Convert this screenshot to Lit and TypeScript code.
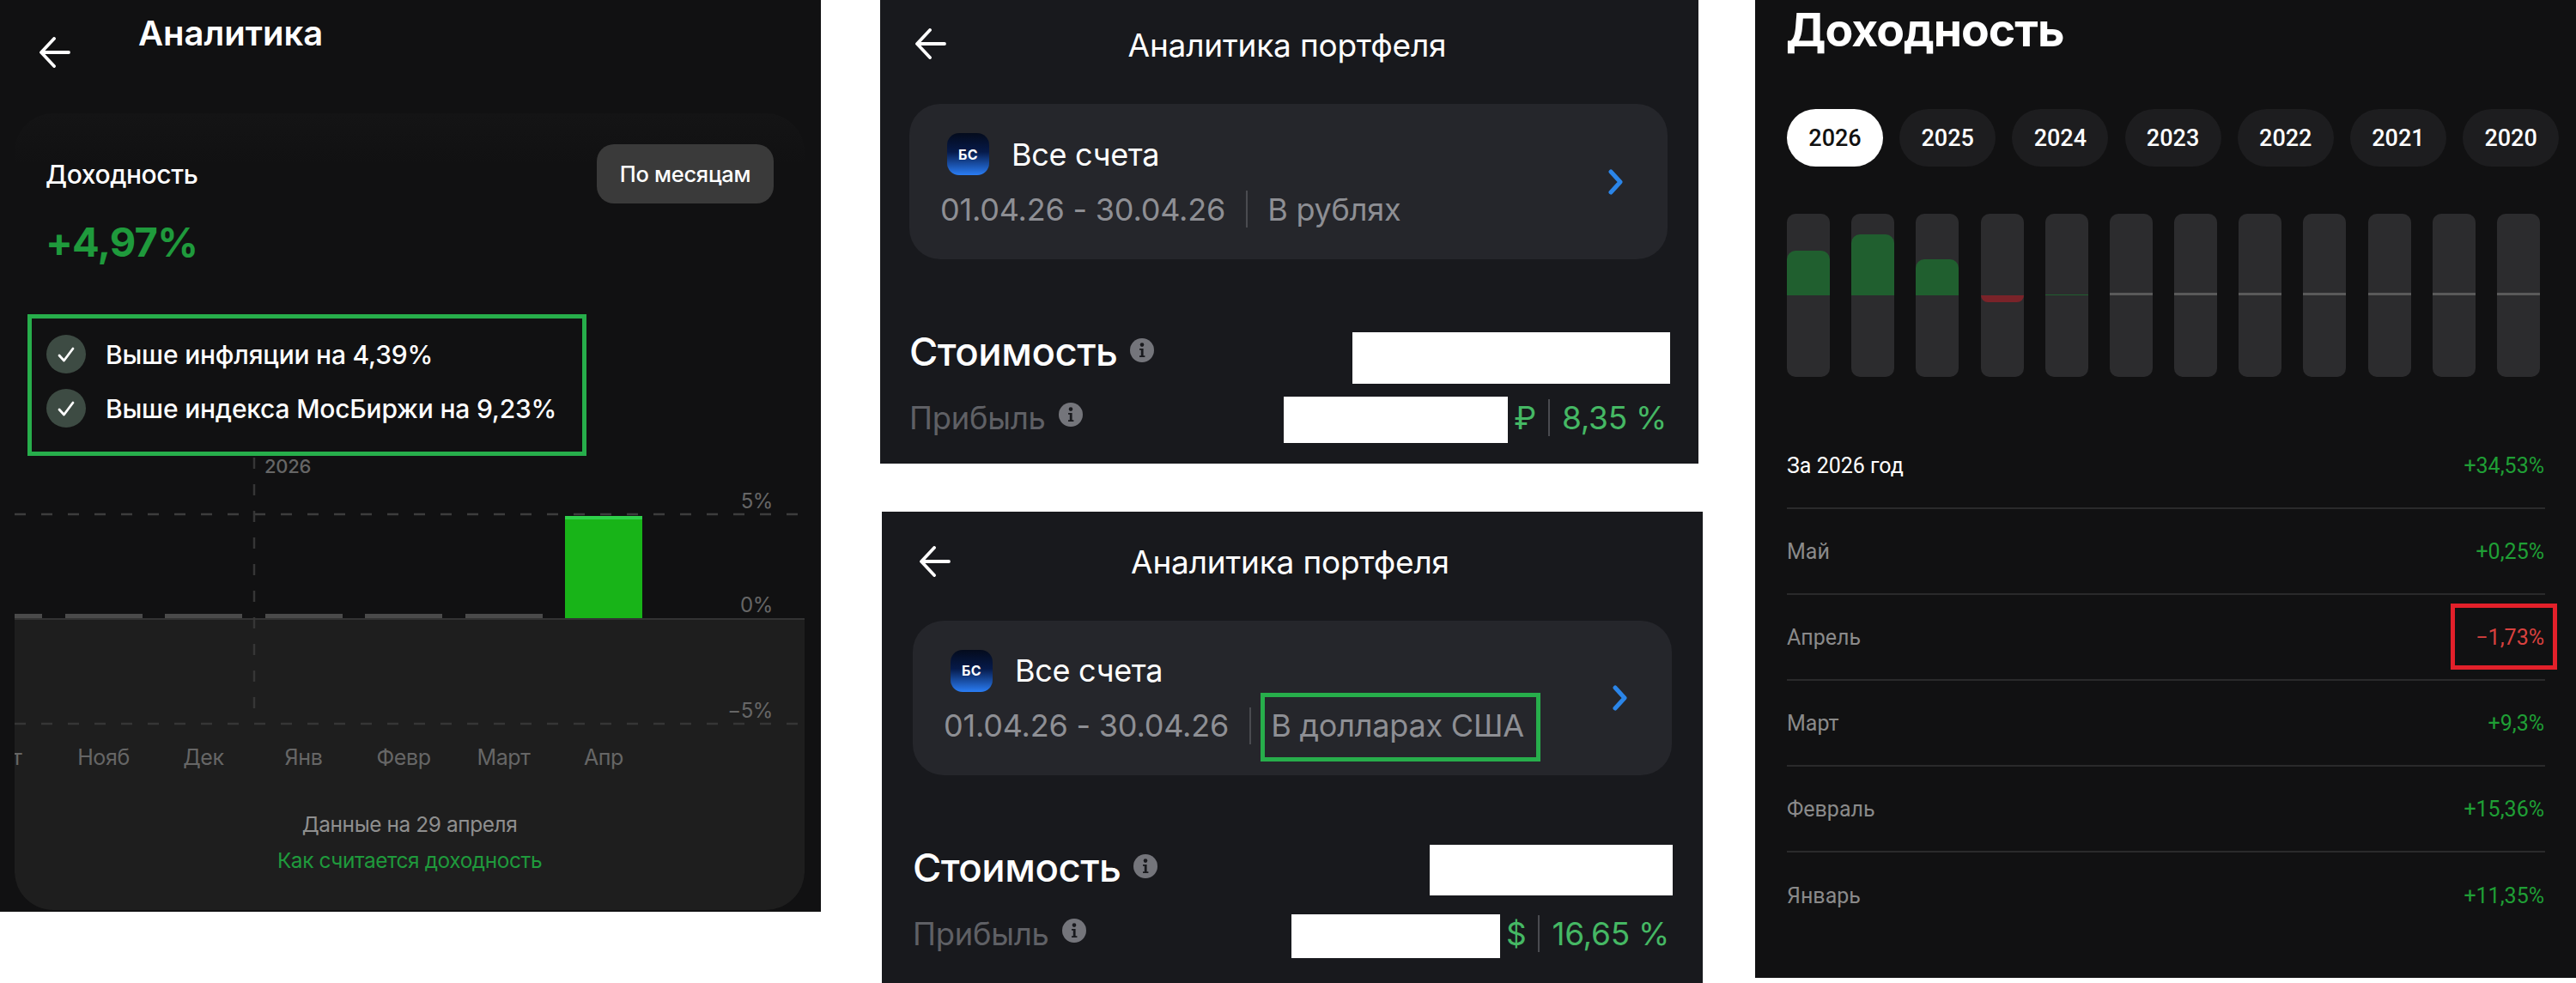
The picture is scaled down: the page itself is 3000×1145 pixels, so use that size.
import { LitElement, html, css, svg } from "lit";
import { customElement } from "lit/decorators.js";

const arrow = html`<svg class="arrow" width="36" height="36" viewBox="0 0 36 36" fill="none" stroke="#fff" stroke-width="3.8" stroke-linecap="round" stroke-linejoin="round"><path d="M34 18H3M17 2 2 18l15 16"/></svg>`;
const check = html`<svg width="24" height="24" viewBox="0 0 24 24" fill="none" stroke="#fff" stroke-width="2.800" stroke-linecap="round" stroke-linejoin="round"><path d="M4 13l5.500 6L20 5"/></svg>`;
const info = html`<svg class="info" width="28" height="28" viewBox="0 0 28 28"><circle cx="14" cy="14" r="14" fill="#74757b"/><circle cx="14" cy="7.600" r="2.300" fill="#18191d"/><path d="M11 12h4.600v8.200H17.400V22h-6.400v-1.800h1.800v-6.400H11z" fill="#18191d"/></svg>`;
const chevron = html`<svg class="chev" width="20" height="30" viewBox="0 0 20 30" fill="none" stroke="#2b85e8" stroke-width="5" stroke-linecap="round" stroke-linejoin="round"><path d="M4 3l11 12L4 27"/></svg>`;

@customElement("portfolio-panel")
class PortfolioPanel extends LitElement {
  static properties = {
    label: { type: String },
    cur: { type: String },
    pct: { type: String },
    highlight: { type: Boolean },
    alt: { type: Boolean },
    b1: { type: Array },
    b2: { type: Array },
  };
  label = "";
  cur = "";
  pct = "";
  highlight = false;
  alt = false;
  b1: number[] = [];
  b2: number[] = [];

  static styles = css`
    :host { display: block; }
    .panel { background: #18191d; height: 540px; overflow: hidden; font-family: Inter, "Noto Sans", sans-serif; color: #fff; box-sizing: border-box; padding-right: 33px; padding-left: 34px; }
    .panel.alt { height: 549px; padding-top: 6px; padding-left: 36px; padding-right: 35px; }
    .top { height: 121px; display: grid; grid-template-columns: 1fr auto 1fr; margin-left: -34px; margin-right: -33px; }
    .alt .top { margin-left: -36px; margin-right: -35px; }
    .back { padding-left: 41px; padding-top: 33px; }
    .alt .back { padding-left: 44px; padding-top: 34px; }
    .arrow { display: block; }
    .title { font-size: 37px; line-height: 46px; margin-top: 30px; margin-right: 5px; letter-spacing: -0.2px; }
    .card { height: 181px; margin-right: 3px; border-radius: 36px; background: #25262b; display: flex; align-items: center; justify-content: space-between; box-sizing: border-box; padding: 0 50px 0 36px; }
    .alt .card { height: 180px; margin-right: 1px; }
    .acct { display: flex; align-items: center; margin-left: 8px; gap: 26px; height: 50px; margin-top: -2px; }
    .logo { width: 49px; height: 49px; border-radius: 14px; background: linear-gradient(180deg, #040b1c 0%, #061a4a 45%, #2a7df5 100%); display: flex; align-items: center; justify-content: center; font-size: 16px; font-weight: 700; letter-spacing: 0.5px; }
    .acct-name { font-size: 36px; line-height: 50px; letter-spacing: -0.3px; }
    .sub { display: flex; align-items: center; margin-top: 16px; height: 46px; font-size: 36px; letter-spacing: -0.2px; color: #8e8f94; }
    .div { width: 2px; height: 43px; background: #4a4b50; margin: 0 23px 0 24px; flex: none; }
    .hl { position: relative; }
    .hl::after { content: ""; position: absolute; left: -12px; right: -19px; top: -16px; bottom: -20px; border: 5px solid #27ae4b; }
    .row { display: flex; justify-content: space-between; align-items: flex-start; }
    .r1 { height: 60px; margin-top: 85px; }
    .r2 { height: 54px; margin-top: 15px; }
    .lbl { display: flex; align-items: flex-start; }
    .r1 .lbl { font-size: 45.500px; line-height: 46px; font-weight: 500; letter-spacing: -0.5px; }
    .r2 .lbl { font-size: 36.300px; line-height: 46px; color: #5f6065; margin-top: 2px; letter-spacing: -0.2px; }
    .info { display: block; margin-left: 15px; margin-top: 7px; }
    .r2 .info { margin-top: 5px; }
    .box { background: #fff; flex: none; }
    .r { display: flex; align-items: flex-start; margin-right: 4px; }
    .cur, .pct { color: #45b864; font-size: 37px; line-height: 46px; margin-top: 2px; letter-spacing: -0.3px; }
    .cur { margin-left: 7px; }
    .sep { width: 2px; height: 43px; background: #4a4b50; margin: 3px 14px 0 14px; }
  `;

  render() {
    return html`<div class="panel ${this.alt ? "alt" : ""}">
      <div class="top"><div class="back">${arrow}</div><div class="title">Аналитика портфеля</div><div></div></div>
      <div class="card">
        <div>
          <div class="acct"><div class="logo">БС</div><div class="acct-name">Все счета</div></div>
          <div class="sub">01.04.26 - 30.04.26<span class="div"></span><span class=${this.highlight ? "hl" : ""}>${this.label}</span></div>
        </div>
        ${chevron}
      </div>
      <div class="row r1">
        <div class="lbl">Стоимость${info}</div>
        <div class="box" style="width:${this.b1[0]}px;height:${this.b1[1]}px;margin-top:${this.b1[2]}px"></div>
      </div>
      <div class="row r2">
        <div class="lbl">Прибыль${info}</div>
        <div class="r">
          <div class="box" style="width:${this.b2[0]}px;height:${this.b2[1]}px;margin-top:${this.b2[2]}px"></div>
          <div class="cur">${this.cur}</div><div class="sep"></div><div class="pct">${this.pct}</div>
        </div>
      </div>
    </div>`;
  }
}

@customElement("app-root")
class AppRoot extends LitElement {
  static styles = css`
    :host { display: block; width: 3000px; height: 1145px; background: #fff; overflow: hidden; }
    .page { display: flex; align-items: flex-start; width: 3000px; height: 1145px; }

    /* left */
    .an { width: 956px; height: 1062px; flex: none; background: #111112; color: #fff; font-family: Inter, "Noto Sans", sans-serif; overflow: hidden; }
    .an-head { height: 132px; display: flex; align-items: flex-start; padding-left: 46px; box-sizing: border-box; }
    .an-head .arrow { margin-top: 43px; }
    .arrow { display: block; }
    .an-title { margin-left: 79px; margin-top: 18px; font-size: 40px; line-height: 42px; font-weight: 600; letter-spacing: 0; }
    .an-card { margin-left: 17px; width: 920px; height: 928px; border-radius: 45px; background: linear-gradient(180deg, #141415 0, #111112 60px); }
    .an-top { display: flex; justify-content: space-between; align-items: center; padding: 36px 36px 0 36px; height: 69px; }
    .an-lab { font-size: 30px; font-weight: 500; letter-spacing: -0.4px; }
    .btn { width: 206px; height: 69px; border-radius: 20px; background: #3a3a3a; display: flex; align-items: center; justify-content: center; font-size: 25.500px; font-weight: 500; letter-spacing: -0.3px; }
    .an-val { margin: 21px 0 0 36px; font-size: 47px; line-height: 48px; font-weight: 700; color: #1f9a3c; letter-spacing: -0.8px; }
    .gbox { margin: 60px 0 0 15px; width: 651px; height: 165px; box-sizing: border-box; border: 5px solid #27ae4b; padding: 19px 0 0 17px; display: flex; flex-direction: column; gap: 18px; }
    .chk { display: flex; align-items: center; gap: 23px; font-size: 30px; font-weight: 500; letter-spacing: -0.2px; height: 45px; }
    .dot { width: 46px; height: 45px; border-radius: 50%; background: #3d4b43; display: flex; align-items: center; justify-content: center; }
    .chart { position: relative; }
    .upper { height: 189px; display: flex; align-items: flex-end; gap: 26.500px; }
    .stub { width: 90px; height: 5px; background: #4a4a4a; flex: none; }
    .stub.first { width: 32px; }
    .up { width: 90px; height: 119px; flex: none; background: #18b418; border-top: 4px solid #2fd04a; box-sizing: border-box; }
    .lower { height: 340px; box-sizing: border-box; border-top: 2px solid #333; background: #1e1e1e; border-radius: 0 0 45px 45px; overflow: hidden; text-align: center; }
    .months { display: flex; gap: 26.500px; margin: 145px 0 0 -58px; font-size: 25px; line-height: 30px; color: #666; letter-spacing: -0.4px; }
    .months span { width: 90px; flex: none; }
    .asof { margin-top: 48px; font-size: 24.400px; line-height: 30px; color: #8f8f8f; letter-spacing: -0.4px; }
    .how { margin-top: 12px; font-size: 24.400px; line-height: 30px; color: #1f9a3c; letter-spacing: -0.4px; }
    .grid { position: absolute; left: 0; top: 0; pointer-events: none; }
    .ax { position: absolute; right: 37px; font-size: 24px; line-height: 24px; color: #666; letter-spacing: -0.4px; }
    .yr { position: absolute; left: 291px; top: 1px; font-size: 22px; line-height: 22px; color: #666; letter-spacing: -0.3px; font-weight: 500; }

    /* middle */
    .mid { width: 958px; margin-left: 69px; flex: none; }
    .mid .p3 { margin: 56px 0 0 2px; }

    /* right */
    .yld { width: 956px; height: 1139px; margin-left: 61px; flex: none; background: #111112; color: #fff; box-sizing: border-box; padding-left: 37px; font-family: Roboto, sans-serif; overflow: hidden; }
    .yld-title { font-size: 53.500px; line-height: 64px; font-weight: 700; margin-top: 3px; margin-left: -1px; font-family: Inter, sans-serif; letter-spacing: -1px; }
    .chips { display: flex; gap: 19.200px; margin-top: 60px; }
    .chip { width: 112px; height: 67px; flex: none; border-radius: 34px; background: #1d1d1f; display: flex; align-items: center; justify-content: center; font-size: 27px; font-weight: 500; }
    .chip.on { background: #fff; color: #111; }
    .bars { display: flex; width: 877px; justify-content: space-between; margin-top: 55px; }
    .bar { width: 50px; height: 190px; border-radius: 10px; background: #2c2c2e; overflow: hidden; display: flex; flex-direction: column; }
    .bar .a { height: 95px; display: flex; align-items: flex-end; flex: none; }
    .fill { width: 100%; }
    .g { background: #205f2f; border-radius: 10px 10px 0 0; }
    .redf { width: 100%; height: 8px; background: #7a2329; border-radius: 0 0 8px 8px; }
    .z { width: 100%; height: 3px; background: #5a5a5a; }
    .thin { width: 100%; height: 1px; background: #205f2f; }
    .rows { width: 883px; margin-top: 54px; }
    .rw { height: 100px; box-sizing: border-box; border-bottom: 2px solid #2a2a2b; display: flex; justify-content: space-between; align-items: center; font-size: 25px; padding-right: 1px; color: #8a8a8a; }
    .rw:last-child { border-bottom: none; }
    .rw.head { color: #fff; }
    .plus { color: #1f9f35; }
    .minus { color: #d9413f; position: relative; }
    .minus::after { content: ""; position: absolute; right: -15px; top: -25px; width: 124px; height: 77px; box-sizing: border-box; border: 5px solid #e3202a; }
  `;

  render() {
    const bars: [string, number][] = [["g", 52], ["g", 71], ["g", 42], ["r", 8], ["t", 1], ["z", 0], ["z", 0], ["z", 0], ["z", 0], ["z", 0], ["z", 0], ["z", 0]];
    const rows = [
      ["За 2026 год", "+34,53%"], ["Май", "+0,25%"], ["Апрель", "−1,73%"], ["Март", "+9,3%"], ["Февраль", "+15,36%"], ["Январь", "+11,35%"],
    ];
    return html`<div class="page">
      <section class="an">
        <div class="an-head">${arrow}<div class="an-title">Аналитика</div></div>
        <div class="an-card">
          <div class="an-top"><div class="an-lab">Доходность</div><div class="btn">По месяцам</div></div>
          <div class="an-val">+4,97%</div>
          <div class="gbox">
            <div class="chk"><span class="dot">${check}</span>Выше инфляции на 4,39%</div>
            <div class="chk"><span class="dot">${check}</span>Выше индекса МосБиржи на 9,23%</div>
          </div>
          <div class="chart">
            <div class="upper">
              <div class="stub first"></div><div class="stub"></div><div class="stub"></div><div class="stub"></div><div class="stub"></div><div class="stub"></div><div class="up"></div>
            </div>
            <div class="lower">
              <div class="months"><span>Окт</span><span>Нояб</span><span>Дек</span><span>Янв</span><span>Февр</span><span>Март</span><span>Апр</span></div>
              <div class="asof">Данные на 29 апреля</div>
              <div class="how">Как считается доходность</div>
            </div>
            <svg class="grid" width="920" height="330" fill="none" stroke-width="2.500">
              ${svg`<path d="M0 68H914" stroke="#3d3d3d" stroke-dasharray="13 18"/>
              <path d="M0 312H914" stroke="#363636" stroke-dasharray="13 18"/>
              <path d="M279 2V312" stroke="#363636" stroke-dasharray="13 18"/>`}
            </svg>
            <div class="yr">2026</div>
            <div class="ax" style="top:41px">5%</div>
            <div class="ax" style="top:162px">0%</div>
            <div class="ax" style="top:285px">−5%</div>
          </div>
        </div>
      </section>

      <div class="mid">
        <portfolio-panel style="width:953px" label="В рублях" cur="₽" pct="8,35 %" .b1=${[370, 60, 0]} .b2=${[261, 54, 0]}></portfolio-panel>
        <portfolio-panel class="p3" alt highlight label="В долларах США" cur="$" pct="16,65 %" .b1=${[283, 59, -4]} .b2=${[243, 51, 2]}></portfolio-panel>
      </div>

      <section class="yld">
        <div class="yld-title">Доходность</div>
        <div class="chips">
          ${["2026", "2025", "2024", "2023", "2022", "2021", "2020"].map((y, i) => html`<div class="chip ${i === 0 ? "on" : ""}">${y}</div>`)}
        </div>
        <div class="bars">
          ${bars.map(([k, h]) => html`<div class="bar">
            <div class="a">${k === "g" ? html`<div class="fill g" style="height:${h}px"></div>` : k === "t" ? html`<div class="thin"></div>` : k === "z" ? html`<div class="z"></div>` : ""}</div>
            ${k === "r" ? html`<div class="redf"></div>` : ""}
          </div>`)}
        </div>
        <div class="rows">
          ${rows.map(([a, b], i) => html`<div class="rw ${i === 0 ? "head" : ""}"><span>${a}</span><span class=${b.startsWith("−") ? "minus" : "plus"}>${b}</span></div>`)}
        </div>
      </section>
    </div>`;
  }
}
